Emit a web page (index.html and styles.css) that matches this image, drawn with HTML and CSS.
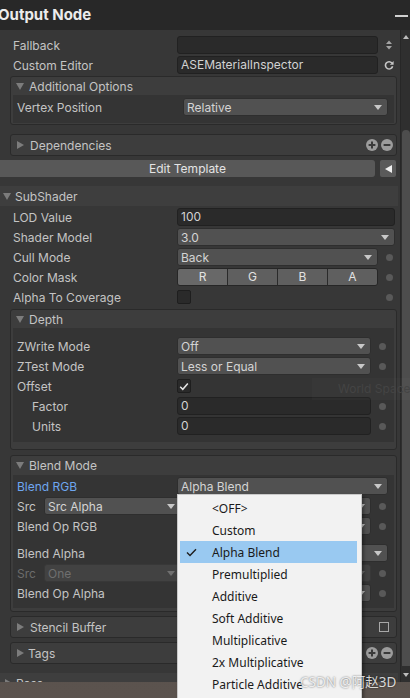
FILE: index.html
```html
<!DOCTYPE html>
<html>
<head>
<meta charset="utf-8">
<title>Output Node</title>
<link rel="stylesheet" href="styles.css">
</head>
<body>
<div class="window">
  <div class="titlebar"><span class="title">Output Node</span><span class="minimize"></span></div>
  <div class="main">
    <div class="content">
      <div class="row"><span class="label">Fallback</span><span class="field"></span><span class="trail"><svg width="6" height="10" viewBox="0 0 6 10"><path d="M3 0.5L6 4H0Z M3 9.5L6 6H0Z" fill="#a3a3a3"/></svg></span></div>
      <div class="row"><span class="label">Custom Editor</span><span class="field">ASEMaterialInspector</span><span class="trail"><svg width="10" height="10" viewBox="0 0 10 10"><path d="M7.9 3.1A3.6 3.6 0 1 0 8.6 6.2" fill="none" stroke="#c8c8c8" stroke-width="1.6"/><path d="M9.6 0.9V4.7H5.8Z" fill="#c8c8c8"/></svg></span></div>

      <div class="box box-add">
        <div class="box-head"><span class="tri tri-down"></span><span class="head-text">Additional Options</span></div>
        <div class="inner inner-add">
          <div class="irow"><span class="label label-wide">Vertex Position</span><span class="dropdown">Relative<i class="arrow"></i></span></div>
        </div>
      </div>

      <div class="box box-dep">
        <div class="box-head"><span class="tri tri-right"></span><span class="head-text">Dependencies</span>
          <svg class="pm" width="27" height="12" viewBox="0 0 27 12"><circle cx="6" cy="6" r="6" fill="#9c9c9c"/><path d="M6 2.6v6.8M2.6 6h6.8" stroke="#3a3a3a" stroke-width="2"/><circle cx="21" cy="6" r="6" fill="#9c9c9c"/><path d="M17.6 6h6.8" stroke="#3a3a3a" stroke-width="2"/></svg>
        </div>
      </div>

      <div class="btnrow"><span class="btn-wide">Edit Template</span><span class="btn-small"><i class="tri-left"></i></span></div>

      <div class="section"><span class="tri tri-down"></span><span class="sec-text">SubShader</span></div>
      <div class="rows-sub">
        <div class="row"><span class="label">LOD Value</span><span class="field">100</span></div>
        <div class="row"><span class="label">Shader Model</span><span class="dropdown">3.0<i class="arrow"></i></span></div>
        <div class="row"><span class="label">Cull Mode</span><span class="dropdown">Back<i class="arrow"></i></span><span class="trail"><i class="dot"></i></span></div>
        <div class="row"><span class="label">Color Mask</span><span class="seg"><span class="seg-item on">R</span><span class="seg-item">G</span><span class="seg-item">B</span><span class="seg-item">A</span></span><span class="trail"><i class="dot"></i></span></div>
        <div class="row"><span class="label">Alpha To Coverage</span><span class="ctrl-wrap"><span class="check"></span></span><span class="trail"><i class="dot"></i></span></div>
      </div>

      <div class="box box-depth">
        <div class="box-head"><span class="tri tri-down"></span><span class="head-text">Depth</span></div>
        <div class="inner inner-depth">
          <div class="irow"><span class="label">ZWrite Mode</span><span class="dropdown">Off<i class="arrow"></i></span><span class="trail"><i class="dot"></i></span></div>
          <div class="irow"><span class="label">ZTest Mode</span><span class="dropdown">Less or Equal<i class="arrow"></i></span><span class="trail"><i class="dot"></i></span></div>
          <div class="irow"><span class="label">Offset</span><span class="ctrl-wrap"><span class="check"><svg width="10" height="9" viewBox="0 0 10 9"><path d="M1.2 4.8L3.8 7.3L8.8 1.5" fill="none" stroke="#e6e6e6" stroke-width="1.5"/></svg></span></span></div>
          <div class="irow"><span class="label indent">Factor</span><span class="field">0</span><span class="trail"><i class="dot"></i></span></div>
          <div class="irow"><span class="label indent">Units</span><span class="field">0</span><span class="trail"><i class="dot"></i></span></div>
        </div>
      </div>

      <div class="box box-blend">
        <div class="box-head"><span class="tri tri-down"></span><span class="head-text">Blend Mode</span></div>
        <div class="inner inner-blend">
          <div class="irow"><span class="label blue">Blend RGB</span><span class="dropdown">Alpha Blend<i class="arrow"></i></span></div>
          <div class="irow"><span class="label short">Src</span><span class="dropdown small">Src Alpha<i class="arrow"></i></span><span class="dropdown rest"><i></i><i class="arrow"></i></span><span class="trail"><i class="dot"></i></span></div>
          <div class="irow"><span class="label">Blend Op RGB</span><span class="dropdown"><i></i><i class="arrow"></i></span><span class="trail"><i class="dot"></i></span></div>
          <div class="spacer"></div>
          <div class="irow"><span class="label">Blend Alpha</span><span class="dropdown"><i></i><i class="arrow"></i></span></div>
          <div class="irow disabled"><span class="label short">Src</span><span class="dropdown small">One<i class="arrow"></i></span><span class="dropdown rest"><i></i><i class="arrow"></i></span><span class="trail"><i class="dot"></i></span></div>
          <div class="irow"><span class="label">Blend Op Alpha</span><span class="dropdown"><i></i><i class="arrow"></i></span><span class="trail"><i class="dot"></i></span></div>
        </div>
      </div>

      <div class="box box-stencil">
        <div class="box-head"><span class="tri tri-right"></span><span class="head-text">Stencil Buffer</span><span class="head-check"></span></div>
      </div>

      <div class="box box-tags">
        <div class="box-head"><span class="tri tri-right"></span><span class="head-text tight">Tags</span>
          <svg class="pm" width="27" height="12" viewBox="0 0 27 12"><circle cx="6" cy="6" r="6" fill="#9c9c9c"/><path d="M6 2.6v6.8M2.6 6h6.8" stroke="#3a3a3a" stroke-width="2"/><circle cx="21" cy="6" r="6" fill="#9c9c9c"/><path d="M17.6 6h6.8" stroke="#3a3a3a" stroke-width="2"/></svg>
        </div>
      </div>

      <div class="section section-pass"><span class="tri tri-right"></span><span class="sec-text">Pass</span></div>
    </div>
    <div class="scrollbar">
      <div class="sb-btn"><i class="sb-up"></i></div>
      <div class="sb-track"><div class="sb-thumb"></div></div>
      <div class="sb-btn"><i class="sb-down"></i></div>
    </div>
  </div>
</div>

<div class="ghost">World Space V</div>

<div class="popup">
  <div class="item"><span class="chk"></span>&lt;OFF&gt;</div>
  <div class="item"><span class="chk"></span>Custom</div>
  <div class="item sel"><span class="chk"><svg width="11" height="9" viewBox="0 0 11 9"><path d="M1 4.6L4 7.5L10 1.2" fill="none" stroke="#1e1e1e" stroke-width="1.4"/></svg></span>Alpha Blend</div>
  <div class="item"><span class="chk"></span>Premultiplied</div>
  <div class="item"><span class="chk"></span>Additive</div>
  <div class="item"><span class="chk"></span>Soft Additive</div>
  <div class="item"><span class="chk"></span>Multiplicative</div>
  <div class="item"><span class="chk"></span>2x Multiplicative</div>
  <div class="item"><span class="chk"></span>Particle Additive</div>
</div>

<div class="watermark">CSDN @阿赵3D</div>
</body>
</html>
```

FILE: styles.css
```css
* { box-sizing: border-box; margin: 0; padding: 0; }
html, body { width: 410px; height: 698px; overflow: hidden; }
body {
  background: linear-gradient(#4f4944, #5b534e);
  font-family: Inter, "Noto Sans", sans-serif;
  font-size: 12px;
  color: #c4c4c4;
  position: relative;
}
.window { height: 682px; display: flex; flex-direction: column; background: #373737; }
.titlebar {
  height: 30px; flex: none; background: #282828;
  display: flex; align-items: center; justify-content: space-between;
  padding-right: 2px;
}
.title { font-size: 15px; font-weight: 700; color: #ececec; margin-left: -2px; margin-top: -2px; }
.minimize { width: 13px; height: 2px; background: #d0d0d0; margin-top: 2px; }
.main { flex: 1; display: flex; min-height: 0; }
.content { width: 400px; flex: none; overflow: hidden; padding-top: 5px; }

/* rows */
.row { height: 20px; display: flex; align-items: center; padding: 0 5px 0 13px; }
.irow { height: 20px; display: flex; align-items: center; padding: 0 6px 0 4px; }
.label { width: 164px; flex: none; white-space: nowrap; }
.irow .label { width: 160px; }
.irow .label-wide { width: 166px; }
.irow .label.short { width: 27px; }
.label.indent { padding-left: 15px; }
.label.blue { color: #6ea6f0; }
.trail { width: 12px; margin-left: 5px; flex: none; display: flex; align-items: center; justify-content: center; }
.dot { display: block; width: 7px; height: 7px; border-radius: 50%; background: #595959; }

.field {
  flex: 1; min-width: 0; height: 18px;
  background: #2a2a2a; border: 1px solid #212121; border-radius: 3px;
  padding-left: 3px; line-height: 16px; color: #d2d2d2; white-space: nowrap; overflow: hidden;
}
.dropdown {
  flex: 1; min-width: 0; height: 18px;
  background: #515151; border: 1px solid #2e2e2e; border-radius: 3px;
  padding: 0 5px 0 3px; display: flex; align-items: center; justify-content: space-between;
  color: #d4d4d4; white-space: nowrap; overflow: hidden;
}
.dropdown.small { flex: none; width: 137px; }
.dropdown.rest { margin-left: 4px; }
.arrow {
  width: 0; height: 0; flex: none;
  border-left: 4px solid transparent; border-right: 4px solid transparent;
  border-top: 5px solid #c8c8c8;
}
.disabled .label { color: #6c6c6c; }
.disabled .dropdown { background: #424242; border-color: #383838; color: #6f6f6f; }
.disabled .arrow { border-top-color: #707070; }

.ctrl-wrap { flex: 1; display: flex; align-items: center; }
.check {
  width: 14px; height: 14px; background: #2a2a2a; border: 1px solid #1e1e1e; border-radius: 2px;
  display: flex; align-items: center; justify-content: center;
}

.seg { flex: 1; height: 18px; display: flex; border: 1px solid #262626; border-radius: 3px; overflow: hidden; }
.seg-item {
  flex: 1; background: #5f5f5f; color: #e2e2e2; text-align: center; line-height: 16px;
  border-left: 1px solid #2a2a2a;
}
.seg-item:first-child { border-left: none; }
.seg-item.on { background: #686868; }

/* boxes */
.box { margin: 0 3px 0 10px; border: 1px solid #2a2a2a; border-radius: 3px; background: #3d3d3d; }
.box-head { height: 19px; display: flex; align-items: center; padding-left: 5px; padding-right: 3px; }
.head-text { margin-left: 5px; flex: 1; }
.head-text.tight { margin-left: 3px; }
.tri { display: inline-block; width: 0; height: 0; flex: none; }
.tri-down { border-left: 4.5px solid transparent; border-right: 4.5px solid transparent; border-top: 7px solid #7c7c7c; }
.tri-right { border-top: 4.5px solid transparent; border-bottom: 4.5px solid transparent; border-left: 7px solid #7c7c7c; margin-left: 1px; margin-right: 1px; }
.pm { flex: none; }
.head-check { width: 10px; height: 10px; border: 1px solid #a8a8a8; margin-right: 4px; }

.inner { background: #343434; margin: 0 2px; }
.box-add { margin-top: 1px; }
.box-add .box-head { height: 18px; }
.inner-add { padding: 2px 0 6px; }
.box-add { padding-bottom: 1px; }
.box-dep { margin-top: 9px; }
.box-dep .box-head { height: 20px; }
.box-depth { margin-top: 2px; padding-bottom: 7px; }
.box-depth .box-head { height: 18px; }
.inner-depth { padding: 8px 0 6px; }
.box-blend { margin-top: 5px; padding-bottom: 3px; }
.inner-blend { padding: 1px 0 5px; }
.spacer { height: 7px; }
.box-stencil { margin-top: 4px; }
.box-tags { margin-top: 4px; }
.box-stencil .box-head, .box-tags .box-head { height: 20px; }

.btnrow { margin-top: 4px; height: 17px; display: flex; padding-right: 4px; }
.btn-wide {
  flex: 1; background: #585858; border-radius: 0 3px 3px 0; color: #e4e4e4;
  text-align: center; line-height: 17px;
}
.btn-small {
  width: 16px; margin-left: 5px; background: #5a5a5a; border-radius: 2px;
  display: flex; align-items: center; justify-content: center;
}
.tri-left { width: 0; height: 0; border-top: 4px solid transparent; border-bottom: 4px solid transparent; border-right: 7px solid #f0f0f0; }

.section {
  margin-top: 9px; margin-right: 2px; height: 20px; background: #3e3e3e;
  display: flex; align-items: center; padding-left: 3px;
}
.sec-text { margin-left: 4px; }
.section .tri-right { margin-left: 2px; margin-right: 0; }
.rows-sub { padding-top: 1px; }
.section-pass { margin-top: 9px; }

/* scrollbar */
.scrollbar { width: 10px; flex: none; background: #2f2f2f; border-left: 1px solid #272727; display: flex; flex-direction: column; }
.sb-btn { height: 14px; display: flex; align-items: center; justify-content: center; }
.sb-up { width: 0; height: 0; border-left: 3px solid transparent; border-right: 3px solid transparent; border-bottom: 4px solid #bdbdbd; }
.sb-down { width: 0; height: 0; border-left: 3px solid transparent; border-right: 3px solid transparent; border-top: 4px solid #bdbdbd; }
.sb-track { flex: 1; padding: 86px 0 2px 1px; display: flex; }
.sb-thumb { flex: 1; background: #4d4d4d; border-radius: 4px 4px 0 0; }

/* overlays */
.ghost {
  position: absolute; left: 312px; top: 378px; width: 98px; height: 22px;
  background: rgba(255,255,255,0.02); color: #444444; padding-left: 26px; line-height: 22px;
  white-space: nowrap; overflow: hidden;
}
.popup {
  position: absolute; left: 177px; top: 494px; width: 185px; height: 210px;
  background: #f2f2f2; border: 1px solid #c9c9c9; padding-top: 2px;
  box-shadow: 2px 2px 3px rgba(0,0,0,0.35);
  font-family: "Noto Sans", "Liberation Sans", sans-serif; font-size: 12px; color: #1a1a1a;
}
.item { height: 22px; display: flex; align-items: center; margin: 0 4px 0 2px; }
.item.sel { background: #99c9f1; }
.chk { width: 32px; flex: none; display: flex; align-items: center; padding-left: 6px; }
.watermark {
  position: absolute; left: 300px; top: 673px;
  font-family: "Noto Sans", "Noto Sans CJK SC", sans-serif; font-size: 13.5px; line-height: 18px;
  color: rgba(255,255,255,0.82); text-shadow: 0 0 2px rgba(0,0,0,0.6);
  white-space: nowrap;
}
```
